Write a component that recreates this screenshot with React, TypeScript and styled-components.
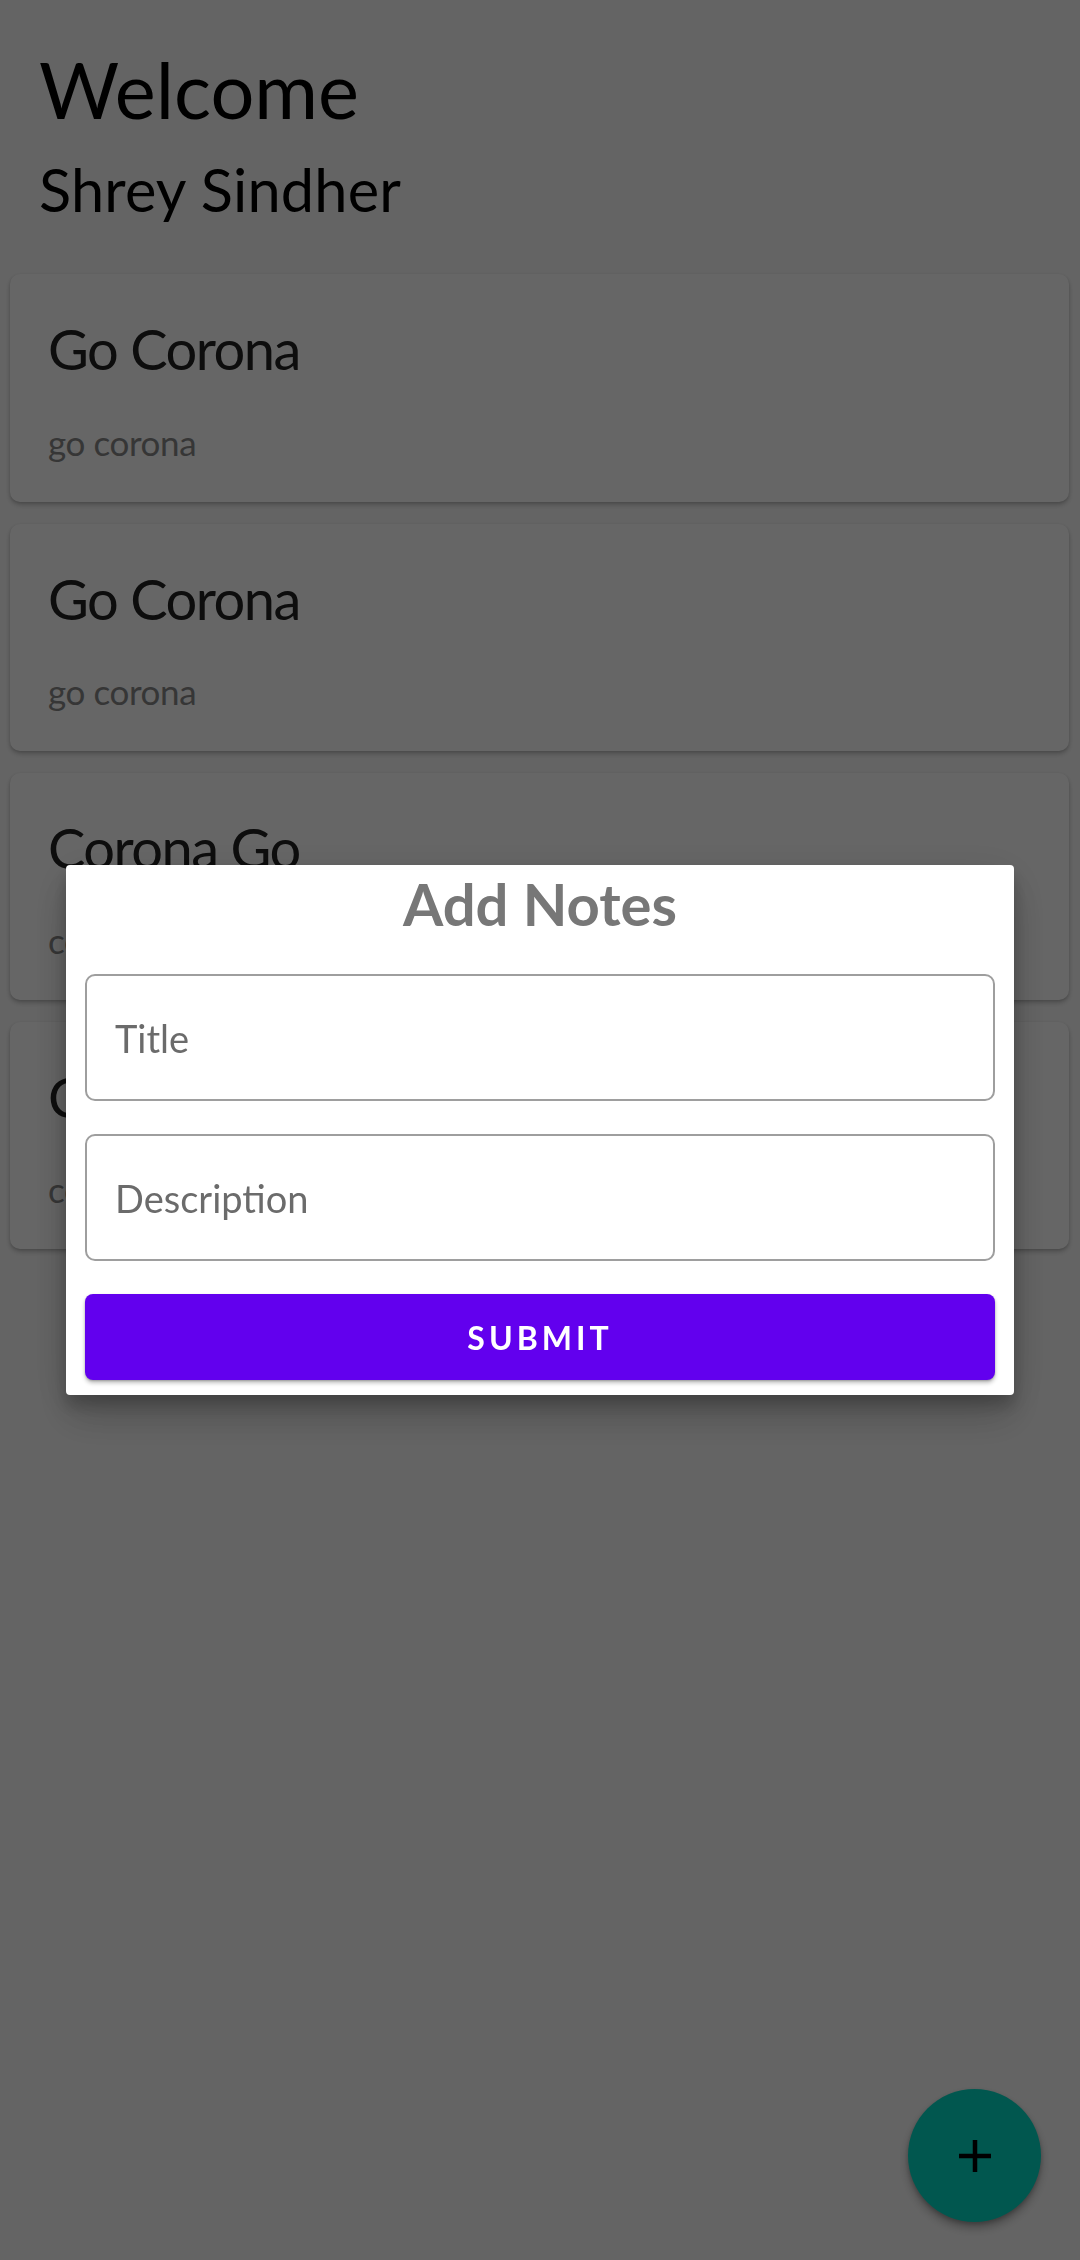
import React from "react";
import styled, { createGlobalStyle } from "styled-components";

const Global = createGlobalStyle`
  html, body { margin: 0; padding: 0; }
  body {
    background: #fafafa;
    font-family: Lato, "Noto Sans", sans-serif;
  }
  * { box-sizing: border-box; }
`;

const Page = styled.div`
  min-height: 2260px;
  background: #fafafa;
  display: flex;
  flex-direction: column;
`;

const Header = styled.header`
  padding: 43px 39px 0;
  display: flex;
  flex-direction: column;
  gap: 18px;
`;

const Welcome = styled.h1`
  margin: 0;
  font-family: Lato, sans-serif;
  font-weight: 400;
  font-size: 77.5px;
  line-height: 1.2;
  color: #000;
`;

const UserName = styled.h2`
  margin: 0;
  font-family: Lato, sans-serif;
  font-weight: 400;
  font-size: 59.5px;
  line-height: 1.2;
  color: #000;
  letter-spacing: 0.2px;
`;

const NoteList = styled.div`
  margin-top: 49px;
  padding: 0 11px 0 10px;
  display: flex;
  flex-direction: column;
  gap: 22px;
`;

const Card = styled.div`
  background: #ffffff;
  border-radius: 10px;
  box-shadow: 0 3px 5px rgba(0, 0, 0, 0.2), 0 1px 3px rgba(0, 0, 0, 0.12);
  padding: 41px 38px 39px;
  display: flex;
  flex-direction: column;
  gap: 38px;
`;

const CardTitle = styled.div`
  font-family: Lato, sans-serif;
  font-size: 56px;
  line-height: 1.2;
  letter-spacing: -1.5px;
  color: #212121;
`;

const CardBody = styled.div`
  font-family: Lato, sans-serif;
  font-size: 35px;
  line-height: 1.2;
  letter-spacing: -0.4px;
  color: #888888;
`;

const Fab = styled.button`
  position: fixed;
  right: 39px;
  bottom: 38px;
  width: 133px;
  height: 133px;
  border-radius: 50%;
  border: none;
  background: #03dac5;
  box-shadow: 0 6px 10px rgba(0, 0, 0, 0.28), 0 2px 4px rgba(0, 0, 0, 0.2);
  display: flex;
  align-items: center;
  justify-content: center;
  padding: 0;
`;

const Overlay = styled.div`
  position: fixed;
  inset: 0;
  background: rgba(0, 0, 0, 0.6);
  display: flex;
  align-items: center;
  justify-content: center;
`;

const Dialog = styled.div`
  width: 948px;
  background: #ffffff;
  border-radius: 4px;
  box-shadow: 0 11px 15px rgba(0, 0, 0, 0.2), 0 24px 38px rgba(0, 0, 0, 0.14),
    0 9px 46px rgba(0, 0, 0, 0.12);
  padding: 4px 19px 15px;
  display: flex;
  flex-direction: column;
`;

const DialogTitle = styled.h3`
  margin: 0 0 36px;
  text-align: center;
  font-family: Lato, sans-serif;
  font-weight: 700;
  font-size: 58px;
  line-height: 1.2;
  letter-spacing: 0px;
  color: #777777;
`;

const Field = styled.input`
  height: 127px;
  width: 100%;
  border: 2px solid #9e9e9e;
  border-radius: 10px;
  padding: 0 28px;
  margin-bottom: 33px;
  font-family: Lato, sans-serif;
  font-size: 38px;
  color: #333;
  background: #fff;
  outline: none;
  &::placeholder {
    color: #6b6b6b;
  }
`;

const Submit = styled.button`
  height: 86px;
  width: 100%;
  border: none;
  border-radius: 8px;
  background: #6200ee;
  color: #ffffff;
  font-family: Lato, sans-serif;
  font-weight: 700;
  font-size: 32px;
  letter-spacing: 4px;
  box-shadow: 0 3px 4px rgba(0, 0, 0, 0.25), 0 1px 2px rgba(0, 0, 0, 0.2);
  cursor: pointer;
`;

const notes = [
  { title: "Go Corona", body: "go corona" },
  { title: "Go Corona", body: "go corona" },
  { title: "Corona Go", body: "corona go" },
  { title: "Corona Go", body: "corona go" },
];

export default function App() {
  return (
    <>
      <Global />
      <Page>
        <Header>
          <Welcome>Welcome</Welcome>
          <UserName>Shrey Sindher</UserName>
        </Header>
        <NoteList>
          {notes.map((n, i) => (
            <Card key={i}>
              <CardTitle>{n.title}</CardTitle>
              <CardBody>{n.body}</CardBody>
            </Card>
          ))}
        </NoteList>
        <Fab aria-label="add">
          <svg width="36" height="36" viewBox="0 0 36 36">
            <path d="M18 2v32M2 18h32" stroke="#000" strokeWidth="4.5" fill="none" />
          </svg>
        </Fab>
      </Page>
      <Overlay>
        <Dialog>
          <DialogTitle>Add Notes</DialogTitle>
          <Field placeholder="Title" />
          <Field placeholder="Description" />
          <Submit>SUBMIT</Submit>
        </Dialog>
      </Overlay>
    </>
  );
}
